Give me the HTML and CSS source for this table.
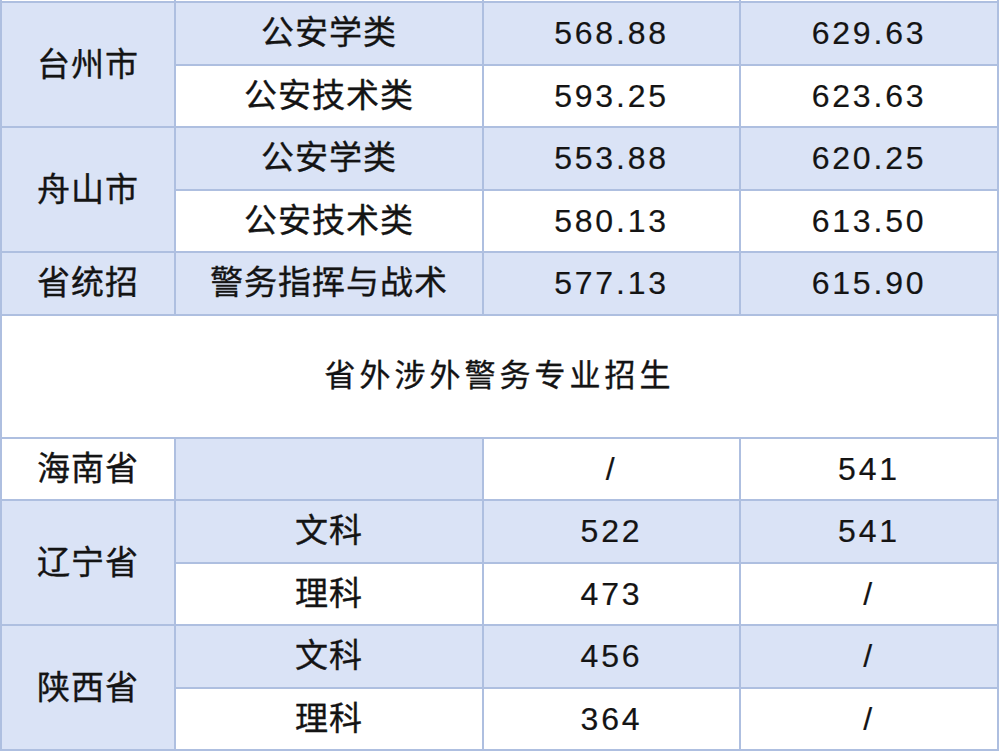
FILE: index.html
```html
<!DOCTYPE html>
<html lang="zh">
<head>
<meta charset="utf-8">
<title>录取分数</title>
<link rel="stylesheet" href="styles.css">
</head>
<body>
<table class="score">
  <colgroup>
    <col class="c1"><col class="c2"><col class="c3"><col class="c4">
  </colgroup>
  <tbody>
    <tr class="sliver"><td></td><td></td><td></td><td></td></tr>
    <tr class="r">
      <td class="tint" rowspan="2">台州市</td>
      <td class="tint">公安学类</td>
      <td class="tint num">568.88</td>
      <td class="tint num">629.63</td>
    </tr>
    <tr class="r">
      <td>公安技术类</td>
      <td class="num">593.25</td>
      <td class="num">623.63</td>
    </tr>
    <tr class="r">
      <td class="tint" rowspan="2">舟山市</td>
      <td class="tint">公安学类</td>
      <td class="tint num">553.88</td>
      <td class="tint num">620.25</td>
    </tr>
    <tr class="r">
      <td>公安技术类</td>
      <td class="num">580.13</td>
      <td class="num">613.50</td>
    </tr>
    <tr class="r">
      <td class="tint">省统招</td>
      <td class="tint">警务指挥与战术</td>
      <td class="tint num">577.13</td>
      <td class="tint num">615.90</td>
    </tr>
    <tr class="head">
      <td colspan="4">省外涉外警务专业招生</td>
    </tr>
    <tr class="r">
      <td>海南省</td>
      <td class="tint"></td>
      <td class="num">/</td>
      <td class="num">541</td>
    </tr>
    <tr class="r">
      <td class="tint" rowspan="2">辽宁省</td>
      <td class="tint">文科</td>
      <td class="tint num">522</td>
      <td class="tint num">541</td>
    </tr>
    <tr class="r">
      <td>理科</td>
      <td class="num">473</td>
      <td class="num">/</td>
    </tr>
    <tr class="r">
      <td class="tint" rowspan="2">陕西省</td>
      <td class="tint">文科</td>
      <td class="tint num">456</td>
      <td class="tint num">/</td>
    </tr>
    <tr class="r">
      <td>理科</td>
      <td class="num">364</td>
      <td class="num">/</td>
    </tr>
  </tbody>
</table>
</body>
</html>
```

FILE: styles.css
```css
html, body {
  margin: 0;
  padding: 0;
  background: #ffffff;
}

.score {
  border-collapse: collapse;
  table-layout: fixed;
  width: 997px;
  margin: 0;
  font-family: "Noto Sans CJK SC", "Noto Sans", sans-serif;
  color: #141414;
}

.c1 { width: 174px; }
.c2 { width: 308px; }
.c3 { width: 257px; }
.c4 { width: 258px; }

.score td {
  border: 2px solid #aebfe0;
  padding: 0 0 5px 0;
  text-align: center;
  vertical-align: middle;
  font-size: 33px;
  line-height: 1;
  letter-spacing: 1px;
  -webkit-text-stroke: 0.35px #141414;
  background: #ffffff;
}

.score td.tint {
  background: #dae3f6;
}

.score td.num {
  font-family: "Liberation Sans", Arial, sans-serif;
  font-size: 32px;
  letter-spacing: 2.8px;
  padding: 0;
  -webkit-text-stroke: 0.2px #141414;
}

.sliver td {
  height: 1px;
  padding: 0;
  border-top: none;
}

.r td {
  height: 55.5px;
}

.r td.num {
  height: 60.5px;
}

.head td {
  height: 114px;
  padding-bottom: 7px;
  font-size: 31px;
  letter-spacing: 4px;
}
```
